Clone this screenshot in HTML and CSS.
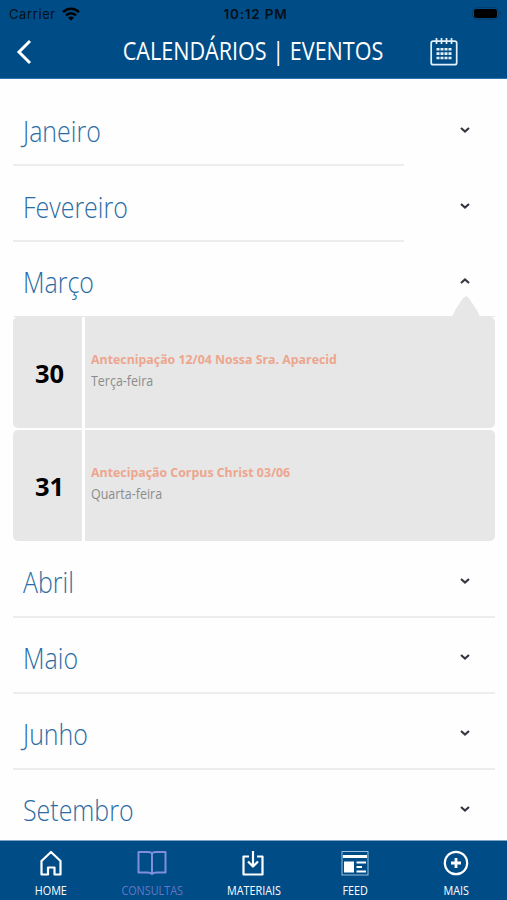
FILE: index.html
```
<!DOCTYPE html>
<html lang="pt-BR">
  <head>
    <meta charset="UTF-8" />
    <meta name="viewport" content="width=device-width, initial-scale=1.0" />
    <title>Calendários | Eventos</title>
    <link rel="stylesheet" href="styles.css">
  </head>
  <body>
    <header class="header">
      <div class="status">
        <div class="carrier">
          <span>Carrier</span>
          <svg width="18" height="14" viewBox="0 0 18 14" fill="none" stroke="#000" stroke-width="2.5">
            <path d="M1 5.2C5.4.6 12.6.6 17 5.2M4 8.4c2.8-2.9 7.2-2.9 10 0" />
            <path d="M9 13.8L6 10.6c1.7-1.5 4.3-1.5 6 0z" fill="#000" stroke="none" />
          </svg>
        </div>
        <span class="clock">10:12 PM</span>
        <div class="battery">
          <svg width="30" height="14" viewBox="0 0 30 14">
            <rect x=".5" y=".5" width="26" height="12" rx="4" fill="none" stroke="#053f70" />
            <rect x="2" y="2" width="23" height="9" rx="2.5" fill="#000" />
            <path d="M28 4.5v4q1.500-.5 1.500-2t-1.500-2" fill="#053f70" />
          </svg>
        </div>
      </div>
      <div class="title_bar">
        <svg class="back" width="18" height="26" viewBox="0 0 18 26" fill="none" stroke="#fff" stroke-width="3">
          <path d="M15 2L4 13l11 11" />
        </svg>
        <h1>CALENDÁRIOS | EVENTOS</h1>
        <svg class="calendar" width="28" height="28" viewBox="0 0 28 28" fill="none" stroke="#e3f0fb" stroke-width="1.7">
          <rect x="1.2" y="3.2" width="25.5" height="23.5" rx="2" />
          <path d="M6.500 0v6M11.500 0v6M16.500 0v6M21.500 0v6" />
          <path d="M6.500 11.200h15M6.500 15.600h15M6.500 20h15" stroke-width="2.6" stroke-dasharray="3 1" />
        </svg>
      </div>
    </header>

    <main class="months">
      <div class="month short">
        <h2>Janeiro</h2>
        <svg class="arrow" width="12" height="8" viewBox="0 0 12 8"><path d="M2 2l4 3.500L10 2" /></svg>
      </div>
      <div class="month short">
        <h2>Fevereiro</h2>
        <svg class="arrow" width="12" height="8" viewBox="0 0 12 8"><path d="M2 2l4 3.500L10 2" /></svg>
      </div>
      <div class="month open">
        <h2>Março</h2>
        <svg class="arrow" width="12" height="8" viewBox="0 0 12 8"><path d="M2 6l4-3.500L10 6" /></svg>
      </div>
      <div class="events">
        <div class="event">
          <div class="day"><span>30</span></div>
          <div class="info">
            <p class="name">Antecnipação 12/04 Nossa Sra. Aparecid</p>
            <p class="weekday">Terça-feira</p>
          </div>
        </div>
        <div class="event">
          <div class="day"><span>31</span></div>
          <div class="info">
            <p class="name">Antecipação Corpus Christ 03/06</p>
            <p class="weekday">Quarta-feira</p>
          </div>
        </div>
      </div>
      <div class="month">
        <h2>Abril</h2>
        <svg class="arrow" width="12" height="8" viewBox="0 0 12 8"><path d="M2 2l4 3.500L10 2" /></svg>
      </div>
      <div class="month">
        <h2>Maio</h2>
        <svg class="arrow" width="12" height="8" viewBox="0 0 12 8"><path d="M2 2l4 3.500L10 2" /></svg>
      </div>
      <div class="month">
        <h2>Junho</h2>
        <svg class="arrow" width="12" height="8" viewBox="0 0 12 8"><path d="M2 2l4 3.500L10 2" /></svg>
      </div>
      <div class="month">
        <h2>Setembro</h2>
        <svg class="arrow" width="12" height="8" viewBox="0 0 12 8"><path d="M2 2l4 3.500L10 2" /></svg>
      </div>
    </main>

    <nav class="tabs">
      <a class="tab">
        <svg width="30" height="28" viewBox="0 0 30 28" fill="none" stroke="#fff" stroke-width="2.2" stroke-linejoin="round">
          <path d="M5.500 12L15 3l9.500 9v13.500h-6v-7h-6.500v7H5.500z" />
        </svg>
        <span>HOME</span>
      </a>
      <a class="tab active">
        <svg width="30" height="28" viewBox="0 0 30 28" fill="none" stroke="#7f8fdc" stroke-width="2" stroke-linejoin="round">
          <path d="M1.500 3h9q4.500 0 4.500 2 0-2 4.500-2h9v20.500h-9q-3 0-4.500 1.500-1.500-1.500-4.500-1.500h-9zM15 5V25" />
        </svg>
        <span>CONSULTAS</span>
      </a>
      <a class="tab">
        <svg width="30" height="28" viewBox="0 0 30 28" fill="none" stroke="#fff" stroke-width="2.2" stroke-linejoin="round">
          <path d="M11 7.500H5.500v18h19v-18H19M15 2v15M10 12.500l5 5 5-5" />
        </svg>
        <span>MATERIAIS</span>
      </a>
      <a class="tab">
        <svg width="30" height="28" viewBox="0 0 30 28" fill="none" stroke="#fff">
          <rect x="2" y="2.5" width="26" height="23.5" stroke="#9cc0df" />
          <path d="M3 7.500h24" stroke-width="3" />
          <path d="M16.500 13.500H26M16.500 18H22M16.500 22.500H26" stroke-width="2" />
          <rect x="4" y="12.5" width="10" height="11" fill="#fff" stroke="none" />
        </svg>
        <span>FEED</span>
      </a>
      <a class="tab">
        <svg width="30" height="28" viewBox="0 0 30 28" fill="none" stroke="#fff" stroke-width="2.2">
          <circle cx="15" cy="14" r="11.2" />
          <path d="M15 9v10M10 14h10" stroke-width="2.8" />
        </svg>
        <span>MAIS</span>
      </a>
    </nav>
  </body>
</html>
```
FILE: styles.css
```
body {
  margin: 0;
  height: 900px;
  display: flex;
  flex-direction: column;
  overflow: hidden;
  background-color: #fefefe;
  font-family: "Open Sans", sans-serif;
}
h1,
h2,
p {
  margin: 0;
}
svg {
  display: block;
  flex: none;
}
.header {
  height: 79px;
  flex: none;
  box-sizing: border-box;
  background-color: #004c87;
  border-bottom: 1px solid #2b74ad;
}
.status {
  height: 27px;
  display: grid;
  grid-template-columns: 1fr auto 1fr;
  align-items: center;
  padding: 0 5px 0 9px;
  font-family: Inter, sans-serif;
  font-size: 13px;
  color: #041018;
}
.carrier {
  display: flex;
  align-items: center;
  gap: 6px;
  letter-spacing: 0.6px;
}
.clock {
  font-size: 13.5px;
  font-weight: 600;
  letter-spacing: 0.8px;
}
.battery {
  justify-self: end;
}
.title_bar {
  height: 49px;
  display: grid;
  grid-template-columns: 28px 1fr 28px;
  align-items: center;
  padding: 0 49px 0 15px;
}
.title_bar h1 {
  justify-self: center;
  margin-left: 34px;
  color: white;
  font-size: 26px;
  font-weight: 400;
  line-height: 44px;
  padding-bottom: 4px;
  white-space: nowrap;
  transform: scaleX(0.83);
}
.months {
  flex: 1;
  min-height: 0;
  overflow: hidden;
  padding: 11px 12px 0 13px;
}
.month {
  height: 76px;
  box-sizing: border-box;
  display: flex;
  align-items: center;
  justify-content: space-between;
  padding: 3px 24px 0 10px;
  border-bottom: 2px solid #ededed;
}
.month.short {
  border-bottom: none;
  background: linear-gradient(#ededed, #ededed) left bottom / 391px 2px no-repeat;
}
.month.open {
  height: 75px;
  position: relative;
  border-bottom: 1px solid #e7e7e7;
}
.month.open::after {
  content: "";
  position: absolute;
  right: 15px;
  bottom: -1px;
  width: 28px;
  height: 21px;
  background-color: #e7e7e7;
  clip-path: polygon(50% 0, 60% 10%, 88% 66%, 100% 100%, 0 100%, 12% 66%, 40% 10%);
}
.month h2 {
  padding-top: 2px;
  color: #2b6ca3;
  font-size: 29px;
  font-weight: 300;
  line-height: 40px;
  transform: scaleX(0.86);
  transform-origin: left;
}
.arrow {
  fill: none;
  stroke: #333840;
  stroke-width: 2.2;
}
.events {
  display: flex;
  flex-direction: column;
  gap: 2px;
  padding-bottom: 1px;
}
.event {
  height: 111px;
  display: flex;
  gap: 3px;
}
.day {
  width: 69px;
  box-sizing: border-box;
  display: flex;
  align-items: center;
  justify-content: center;
  padding: 1px 0 0 4px;
  background-color: #e7e7e7;
  border-radius: 5px 0 0 5px;
  color: black;
  font-size: 25.5px;
  font-weight: 700;
}
.info {
  flex: 1;
  padding: 32px 6px 0;
  background-color: #e7e7e7;
  border-radius: 0 5px 5px 0;
  white-space: nowrap;
}
.name {
  color: #eda68e;
  font-size: 13px;
  font-weight: 700;
  line-height: 21px;
  transform: scaleX(0.95);
  transform-origin: left;
}
.weekday {
  color: #8c8c8c;
  font-size: 14px;
  line-height: 21px;
  transform: scaleX(0.89);
  transform-origin: left;
}
.tabs {
  height: 60px;
  flex: none;
  box-sizing: border-box;
  display: grid;
  grid-template-columns: repeat(5, 1fr);
  background-color: #004c87;
  border-top: 1px solid #7fa6c5;
}
.tab {
  display: flex;
  flex-direction: column;
  align-items: center;
  padding-top: 8px;
  color: white;
  font-size: 12px;
  line-height: 28px;
}
.tab span {
  transform: scaleX(0.9);
}
.tab.active {
  color: #6576c4;
}
```
